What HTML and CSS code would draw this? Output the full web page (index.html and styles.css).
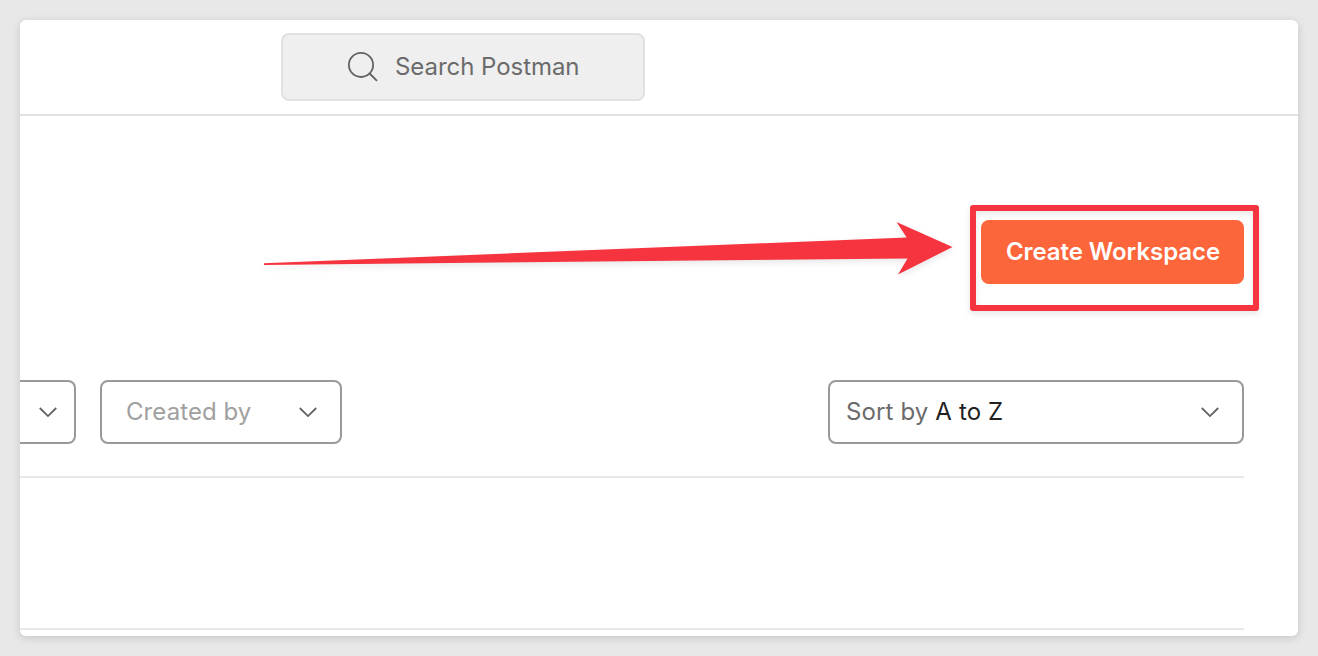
FILE: index.html
```html
<!DOCTYPE html>
<html lang="en">
<head>
<meta charset="utf-8">
<title>Workspaces</title>
<link rel="stylesheet" href="styles.css">
</head>
<body>
<main class="panel">
  <header class="topbar">
    <div class="search">
      <svg class="search-icon" width="32" height="32" viewBox="0 0 32 32"><circle cx="14" cy="13.9" r="12.1"/><path d="M22.6 22.5L30 29.9"/></svg>
      <span class="search-label">Search Postman</span>
    </div>
  </header>
  <section class="actions">
    <button class="create">Create Workspace</button>
  </section>
  <section class="filters">
    <div class="select cut"><svg class="chevron" width="20" height="12" viewBox="0 0 20 12"><path d="M1.8 2L10 10.1L18.2 2"/></svg></div>
    <div class="select created"><span class="created-label">Created by</span><svg class="chevron" width="20" height="12" viewBox="0 0 20 12"><path d="M1.8 2L10 10.1L18.2 2"/></svg></div>
    <div class="select sort"><span class="sort-label">Sort by <b class="sort-value">A to Z</b></span><svg class="chevron" width="20" height="12" viewBox="0 0 20 12"><path d="M1.8 2L10 10.1L18.2 2"/></svg></div>
  </section>
  <section class="row"></section>
</main>
<svg class="arrow" width="700" height="64" viewBox="260 216 700 64"><path d="M264 263.2L906.7 237.5L896.5 222L952.5 247L898 274.5L907.5 258.4L264 264.9Z"/></svg>
<div class="highlight"></div>
</body>
</html>
```
FILE: styles.css
```css
* { box-sizing: border-box; }
body {
  margin: 0;
  padding: 20px;
  height: 656px;
  overflow: hidden;
  position: relative;
  background: #e8e8e8;
  font: 24px/32px Inter, sans-serif;
}
.panel {
  height: 616px;
  background: #fff;
  border-radius: 6px;
  overflow: hidden;
  box-shadow: 0 2px 8px rgba(0, 0, 0, .15);
}
.topbar {
  height: 96px;
  padding: 13px 0 0 261px;
  border-bottom: 2px solid #e1e1e1;
}
.search {
  display: flex;
  align-items: center;
  width: 364px;
  height: 68px;
  padding-left: 64px;
  border: 2px solid #e1e1e1;
  border-radius: 8px;
  background: #efefef;
  color: #6b6b6b;
}
.search-icon, .chevron {
  fill: none;
  stroke: #626262;
  stroke-width: 1.8;
  flex: none;
}
.search-label { margin-left: 16px; letter-spacing: -.05px; }
.actions {
  display: flex;
  justify-content: flex-end;
  height: 264px;
  padding: 104px 54px 0 0;
}
.create {
  width: 263px;
  height: 64px;
  padding: 0 0 0 1px;
  border: 0;
  border-radius: 8px;
  background: #fd653a;
  color: #fff;
  font: 600 24px/32px Inter, sans-serif;
  letter-spacing: -.06px;
}
.filters {
  display: flex;
  height: 98px;
  margin-right: 54px;
  border-bottom: 2px solid #e8e8e8;
}
.select {
  display: flex;
  align-items: center;
  justify-content: space-between;
  height: 64px;
  border: 2px solid #999;
  border-radius: 8px;
}
.cut {
  width: 56px;
  padding-left: 18px;
  border-left: 0;
  border-radius: 0 8px 8px 0;
}
.created {
  width: 242px;
  margin-left: 24px;
  padding: 0 22px 0 24px;
}
.created-label { color: #a0a0a0; letter-spacing: .08px; }
.sort {
  width: 416px;
  margin-left: auto;
  padding: 0 22px 0 16px;
}
.sort-label { color: #6b6b6b; letter-spacing: .13px; }
.sort-value { color: #212121; font-weight: 400; }
.row {
  height: 152px;
  margin-right: 54px;
  border-bottom: 2px solid #e8e8e8;
}
.arrow {
  position: absolute;
  left: 260px;
  top: 216px;
  overflow: visible;
  fill: #f6343f;
  filter: drop-shadow(0 3px 3px rgba(0, 0, 0, .09));
}
.highlight {
  position: absolute;
  left: 970px;
  top: 205px;
  width: 288.5px;
  height: 106px;
  border: 6px solid #f6343f;
  border-radius: 3px;
  filter: drop-shadow(0 3px 3px rgba(0, 0, 0, .1));
}
```
